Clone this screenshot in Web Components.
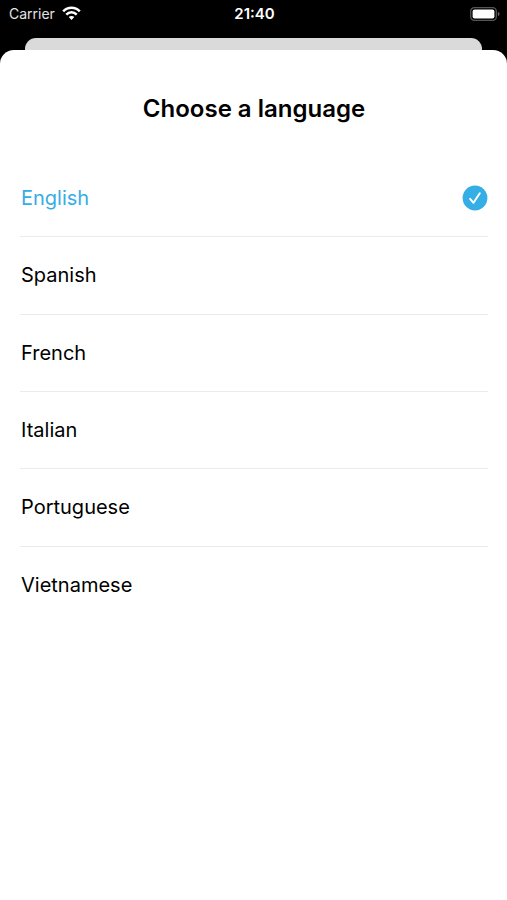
<!DOCTYPE html>
<html lang="en">
<head>
<meta charset="utf-8">
<meta name="viewport" content="width=device-width, initial-scale=1">
<title>Choose a language</title>
<style>
  body { margin: 0; background: #000; color: #000; font-family: Inter, "Liberation Sans", sans-serif; }
</style>
</head>
<body>
<language-screen>
  <status-bar slot="status"><span slot="carrier">Carrier</span><span slot="time">21:40</span></status-bar>
  <bottom-sheet>
    <span slot="title">Choose a language</span>
    <language-list value="English" options="English,Spanish,French,Italian,Portuguese,Vietnamese"></language-list>
  </bottom-sheet>
</language-screen>

<script>
  class ShadowElement extends HTMLElement {
    constructor() {
      super();
      this.attachShadow({ mode: 'open' }).innerHTML = this.constructor.markup;
    }
  }

  customElements.define('language-screen', class extends ShadowElement {
    static markup = `
      <style>
        :host { display: flex; flex-direction: column; min-height: 100vh; }
      </style>
      <slot name="status"></slot>
      <slot></slot>`;
  });

  customElements.define('status-bar', class extends ShadowElement {
    static markup = `
      <style>
        :host { display: grid; grid-template-columns: 1fr auto 1fr; align-items: center;
                height: 28px; padding: 0 7px 0 9px; color: #fff; font-size: 14px; line-height: 20px; }
        .left { display: flex; align-items: center; gap: 7px; color: #e4e4e4; }
        .time { font-size: 15px; font-weight: 600; }
        .battery { justify-self: end; }
        svg { display: block; }
      </style>
      <div class="left">
        <slot name="carrier"></slot>
        <svg width="19" height="16" viewBox="0 0 19 16" fill="none" stroke="#fff" stroke-width="2.5" aria-label="Wi-Fi">
          <path d="M1.2 5.4C5.8 .6 13.2 .6 17.8 5.4"/>
          <path d="M4.3 8.6c2.9-3 7.5-3 10.4 0"/>
          <path d="M9.5 14 6.7 11.1c1.6-1.5 4-1.5 5.6 0z" fill="#fff" stroke="none"/>
        </svg>
      </div>
      <div class="time"><slot name="time"></slot></div>
      <svg class="battery" width="30" height="14" viewBox="0 0 30 14" aria-label="Battery">
        <rect x=".7" y=".7" width="25.6" height="12.6" rx="3.6" fill="none" stroke="#555" stroke-width="1.3"/>
        <rect x="2.6" y="2.6" width="21.8" height="8.8" rx="2" fill="#fff"/>
        <path d="M27.9 4.8q1.7.8 1.7 2.2t-1.7 2.2z" fill="#666"/>
      </svg>`;
  });

  customElements.define('bottom-sheet', class extends ShadowElement {
    static markup = `
      <style>
        :host { display: flex; flex-direction: column; flex: 1; padding-top: 10px; }
        .behind { height: 12px; margin: 0 25px; border-radius: 11px 11px 0 0; background: #dadada; }
        .sheet { flex: 1; padding: 41px 19px 32px 20px; border-radius: 14px 14px 0 0; background: #fff; }
        h1 { margin: 0 0 33px; font-size: 24px; line-height: 36px; font-weight: 600; text-align: center; }
      </style>
      <div class="behind"></div>
      <main class="sheet">
        <h1><slot name="title"></slot></h1>
        <slot></slot>
      </main>`;
  });

  customElements.define('check-badge', class extends ShadowElement {
    static markup = `
      <style>
        :host { display: block; }
        svg { display: block; }
      </style>
      <svg width="26" height="26" viewBox="0 0 26 26" aria-hidden="true">
        <circle cx="13" cy="13" r="12.4" fill="#35ade5"/>
        <path d="M8.1 13.9l3.4 3.9 6.3-9.5" fill="none" stroke="#fff" stroke-width="2" stroke-linecap="round" stroke-linejoin="round"/>
      </svg>`;
  });

  customElements.define('language-list', class extends ShadowElement {
    static markup = `
      <style>
        :host { display: block; }
        form { display: grid; grid-auto-rows: 1fr; min-height: 464px; }
        label { position: relative; display: flex; align-items: center; justify-content: space-between;
                padding-left: 1px; border-bottom: 1px solid #ebebeb; font-size: 20px; line-height: 28px; cursor: pointer; }
        label:last-child { border-bottom-color: transparent; }
        input { position: absolute; inset: 0; margin: 0; opacity: 0; cursor: pointer; }
        check-badge { visibility: hidden; }
        label:has(:checked) { color: #35ade5; }
        label:has(:checked) check-badge { visibility: visible; }
        label:has(:focus-visible) { outline: 2px solid #35ade5; }
      </style>
      <form></form>`;
    connectedCallback() {
      const form = this.shadowRoot.querySelector('form');
      form.replaceChildren(...this.getAttribute('options').split(',').map(name => {
        const label = document.createElement('label');
        const input = document.createElement('input');
        const text = document.createElement('span');
        input.type = 'radio';
        input.name = 'language';
        input.value = name;
        input.checked = name === this.getAttribute('value');
        text.textContent = name;
        label.append(input, text, document.createElement('check-badge'));
        return label;
      }));
    }
  });
</script>
</body>
</html>
